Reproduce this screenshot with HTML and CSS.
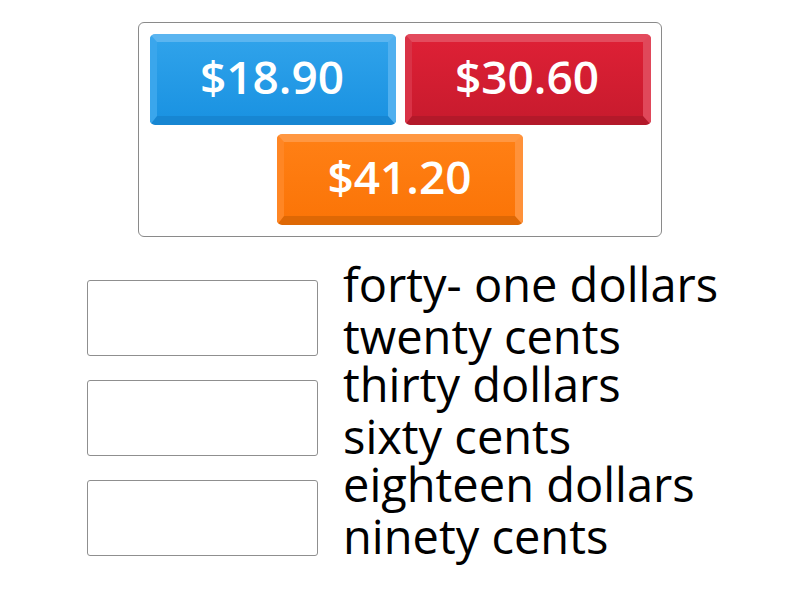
FILE: index.html
```html
<!DOCTYPE html>
<html lang="en">
<head>
    <meta charset="UTF-8">
    <meta name="viewport" content="width=device-width, initial-scale=1.0">
    <title>Match up</title>
    <link rel="stylesheet" href="styles.css">
</head>
<body>
    <div class="keys">
        <div class="key blue">$18.90</div>
        <div class="key red">$30.60</div>
        <div class="key orange">$41.20</div>
    </div>

    <div class="rows">
        <div class="row">
            <div class="slot"></div>
            <div class="words">forty- one dollars<br>twenty cents</div>
        </div>
        <div class="row">
            <div class="slot"></div>
            <div class="words">thirty dollars<br>sixty cents</div>
        </div>
        <div class="row">
            <div class="slot"></div>
            <div class="words">eighteen dollars<br>ninety cents</div>
        </div>
    </div>
</body>
</html>
```

FILE: styles.css
```css
body {
    margin: 0;
    background: #fff;
    font-family: "Open Sans", "Liberation Sans", sans-serif;
    color: #000;
}
.keys {
    width: 502px;
    margin: 22px auto 0;
    padding: 11px 10px;
    border: 1px solid #8a8a8a;
    border-radius: 6px;
    display: flex;
    flex-wrap: wrap;
    justify-content: center;
    gap: 9px;
}
.key {
    width: 231px;
    height: 67px;
    padding-bottom: 7px;
    border-style: solid;
    border-width: 8px 8px 9px 7px;
    border-radius: 5px;
    color: #fff;
    font-size: 46px;
    font-weight: 600;
    display: flex;
    align-items: center;
    justify-content: center;
}
.blue {
    background: linear-gradient(#2fa2ea, #1b93e2);
    border-color: #5bb5f0 #50b0ef #1786d2 #3aa6ec;
}
.red {
    background: linear-gradient(#dd2035, #c91b2e);
    border-color: #e34b5d #e0485a #b3192a #d93246;
}
.orange {
    background: linear-gradient(#ff7f14, #fb7508);
    border-color: #ff9742 #ff923a #de6805 #ff8624;
}
.rows {
    margin-top: 31px;
    padding-left: 87px;
}
.row {
    height: 100px;
    display: flex;
    align-items: flex-start;
    gap: 25px;
}
.slot {
    width: 229px;
    height: 74px;
    margin-top: 12px;
    border: 1px solid #8f8f8f;
    border-radius: 3px;
    flex-shrink: 0;
}
.words {
    margin-top: -10px;
    font-size: 47px;
    line-height: 52px;
    white-space: nowrap;
}
```
